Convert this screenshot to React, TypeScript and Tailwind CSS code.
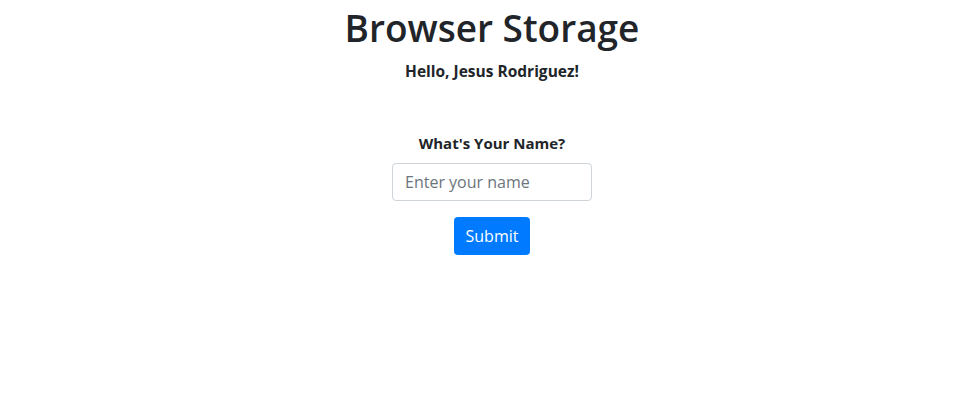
import { useState } from 'react'

export default function App() {
  const [name, setName] = useState('')

  return (
    <div className="min-h-[399px] bg-white pl-[4px] text-[#212529] font-['Segoe_UI','Open_Sans',sans-serif]">
      <div className="flex flex-col items-center text-center">
        {/* 标题 */}
        <h1 className="mt-[4px] text-[37px] leading-[48px] font-semibold">Browser Storage</h1>
        <h6 className="mt-[10px] text-[15.5px] leading-[19px] font-bold">Hello, Jesus Rodriguez!</h6>

        {/* 表单 */}
        <form className="mt-[53px] flex flex-col items-center" onSubmit={(e) => e.preventDefault()}>
          <label htmlFor="name" className="text-[15px] leading-[19px] font-bold">
            What's Your Name?
          </label>
          <input
            id="name"
            value={name}
            onChange={(e) => setName(e.target.value)}
            placeholder="Enter your name"
            className="mt-[10px] w-[200px] h-[38px] px-3 text-[16px] border border-[#ced4da] rounded-[4px] placeholder:text-[#6c757d] outline-none"
          />
          <button
            type="submit"
            className="mt-4 w-[76px] h-[38px] bg-[#007bff] text-white text-[16px] rounded-[4px]"
          >
            Submit
          </button>
        </form>
      </div>
    </div>
  )
}
